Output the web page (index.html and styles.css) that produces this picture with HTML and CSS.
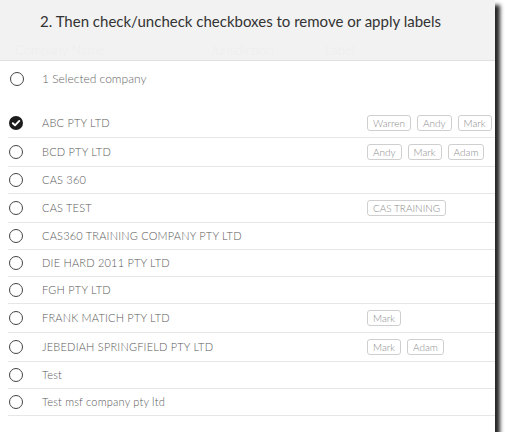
FILE: index.html
```html
<!DOCTYPE html>
<html lang="en">
<head>
    <meta charset="UTF-8">
    <meta name="viewport" content="width=device-width, initial-scale=1.0">
    <title>Apply labels</title>
    <link rel="stylesheet" href="styles.css">
</head>
<body>
    <div class="panel">
        <!-- Step header -->
        <div class="panel-head">
            <h2>2. Then check/uncheck checkboxes to remove or apply labels</h2>
            <div class="ghost-cols">
                <span class="col-name">Company Name</span>
                <span class="col-juris">Jurisdiction</span>
                <span class="col-label">Label</span>
            </div>
        </div>

        <!-- Select all -->
        <div class="select-all">
            <span class="radio"></span>
            <span class="select-text">1 Selected company</span>
        </div>

        <!-- Company list -->
        <ul class="company-list">
            <li class="row">
                <span class="radio checked">
                    <svg viewBox="0 0 14 14" width="14" height="14"><circle cx="7" cy="7" r="7" fill="#1c1c1c"/><path d="M3.8 7.2 L6 9.3 L10.3 4.9" fill="none" stroke="#fff" stroke-width="1.9" stroke-linecap="round" stroke-linejoin="round"/></svg>
                </span>
                <span class="name">ABC PTY LTD</span>
                <span class="labels"><span class="tag">Warren</span><span class="tag">Andy</span><span class="tag">Mark</span></span>
            </li>
            <li class="row">
                <span class="radio"></span>
                <span class="name">BCD PTY LTD</span>
                <span class="labels"><span class="tag">Andy</span><span class="tag">Mark</span><span class="tag">Adam</span></span>
            </li>
            <li class="row">
                <span class="radio"></span>
                <span class="name">CAS 360</span>
            </li>
            <li class="row">
                <span class="radio"></span>
                <span class="name">CAS TEST</span>
                <span class="labels"><span class="tag">CAS TRAINING</span></span>
            </li>
            <li class="row">
                <span class="radio"></span>
                <span class="name">CAS360 TRAINING COMPANY PTY LTD</span>
            </li>
            <li class="row">
                <span class="radio"></span>
                <span class="name">DIE HARD 2011 PTY LTD</span>
            </li>
            <li class="row">
                <span class="radio"></span>
                <span class="name">FGH PTY LTD</span>
            </li>
            <li class="row">
                <span class="radio"></span>
                <span class="name">FRANK MATICH PTY LTD</span>
                <span class="labels"><span class="tag">Mark</span></span>
            </li>
            <li class="row">
                <span class="radio"></span>
                <span class="name">JEBEDIAH SPRINGFIELD PTY LTD</span>
                <span class="labels"><span class="tag">Mark</span><span class="tag">Adam</span></span>
            </li>
            <li class="row">
                <span class="radio"></span>
                <span class="name">Test</span>
            </li>
            <li class="row">
                <span class="radio"></span>
                <span class="name">Test msf company pty ltd</span>
            </li>
        </ul>
    </div>
</body>
</html>
```

FILE: styles.css
```css
/* Colours */
:root {
    --head-bg: #f2f2f2;
    --line-color: #e6e6e6;
    --text-color: #595959;
    --tag-border: #cfcfcf;
}

body {
    margin: 0;
    background: #ffffff;
    font-family: Lato, "Open Sans", sans-serif;
    font-weight: 300;
    color: var(--text-color);
}

/* Window */
.panel {
    width: 495px;
    height: 432px;
    background: #ffffff;
    box-shadow: 5px 5px 4px rgba(0, 0, 0, 0.85);
    overflow: hidden;
}

/* Header */
.panel-head {
    height: 60px;
    background: var(--head-bg);
    border-bottom: 1px solid #e0e0e0;
}

.panel-head h2 {
    margin: 0;
    padding: 13px 0 0 40px;
    font-size: 15px;
    font-weight: normal;
    line-height: 17px;
    color: #333333;
}

.ghost-cols {
    display: flex;
    padding: 12px 0 0 15px;
    font-size: 13px;
    color: #eeeeee;
}

.col-name { width: 195px; }
.col-juris { width: 115px; }

/* Select all */
.select-all {
    display: flex;
    align-items: center;
    height: 35px;
    padding: 0 0 0 9px;
    font-size: 12px;
    color: #666666;
}

.select-text {
    margin-left: 18px;
}

/* Rows */
.company-list {
    list-style: none;
    margin: 13px 0 0 8px;
    padding: 0;
}

.row {
    display: flex;
    align-items: center;
    min-height: 26px;
    border-bottom: 1px solid var(--line-color);
    font-size: 11px;
}

.radio {
    display: inline-block;
    width: 12px;
    height: 12px;
    margin-left: 1px;
    border: 1.3px solid #444444;
    border-radius: 50%;
    flex: none;
}

.radio.checked {
    width: 14px;
    height: 14px;
    border: none;
}

.radio.checked svg {
    display: block;
}

.name {
    margin-left: 19px;
    width: 325px;
    line-height: 14px;
    letter-spacing: 0.2px;
}

.labels {
    display: flex;
    gap: 6px;
    padding: 6px 0;
}

.tag {
    height: 14px;
    line-height: 14px;
    padding: 0 5px;
    border: 1px solid var(--tag-border);
    border-radius: 3px;
    font-size: 10px;
    color: #8a8a8a;
}
```
